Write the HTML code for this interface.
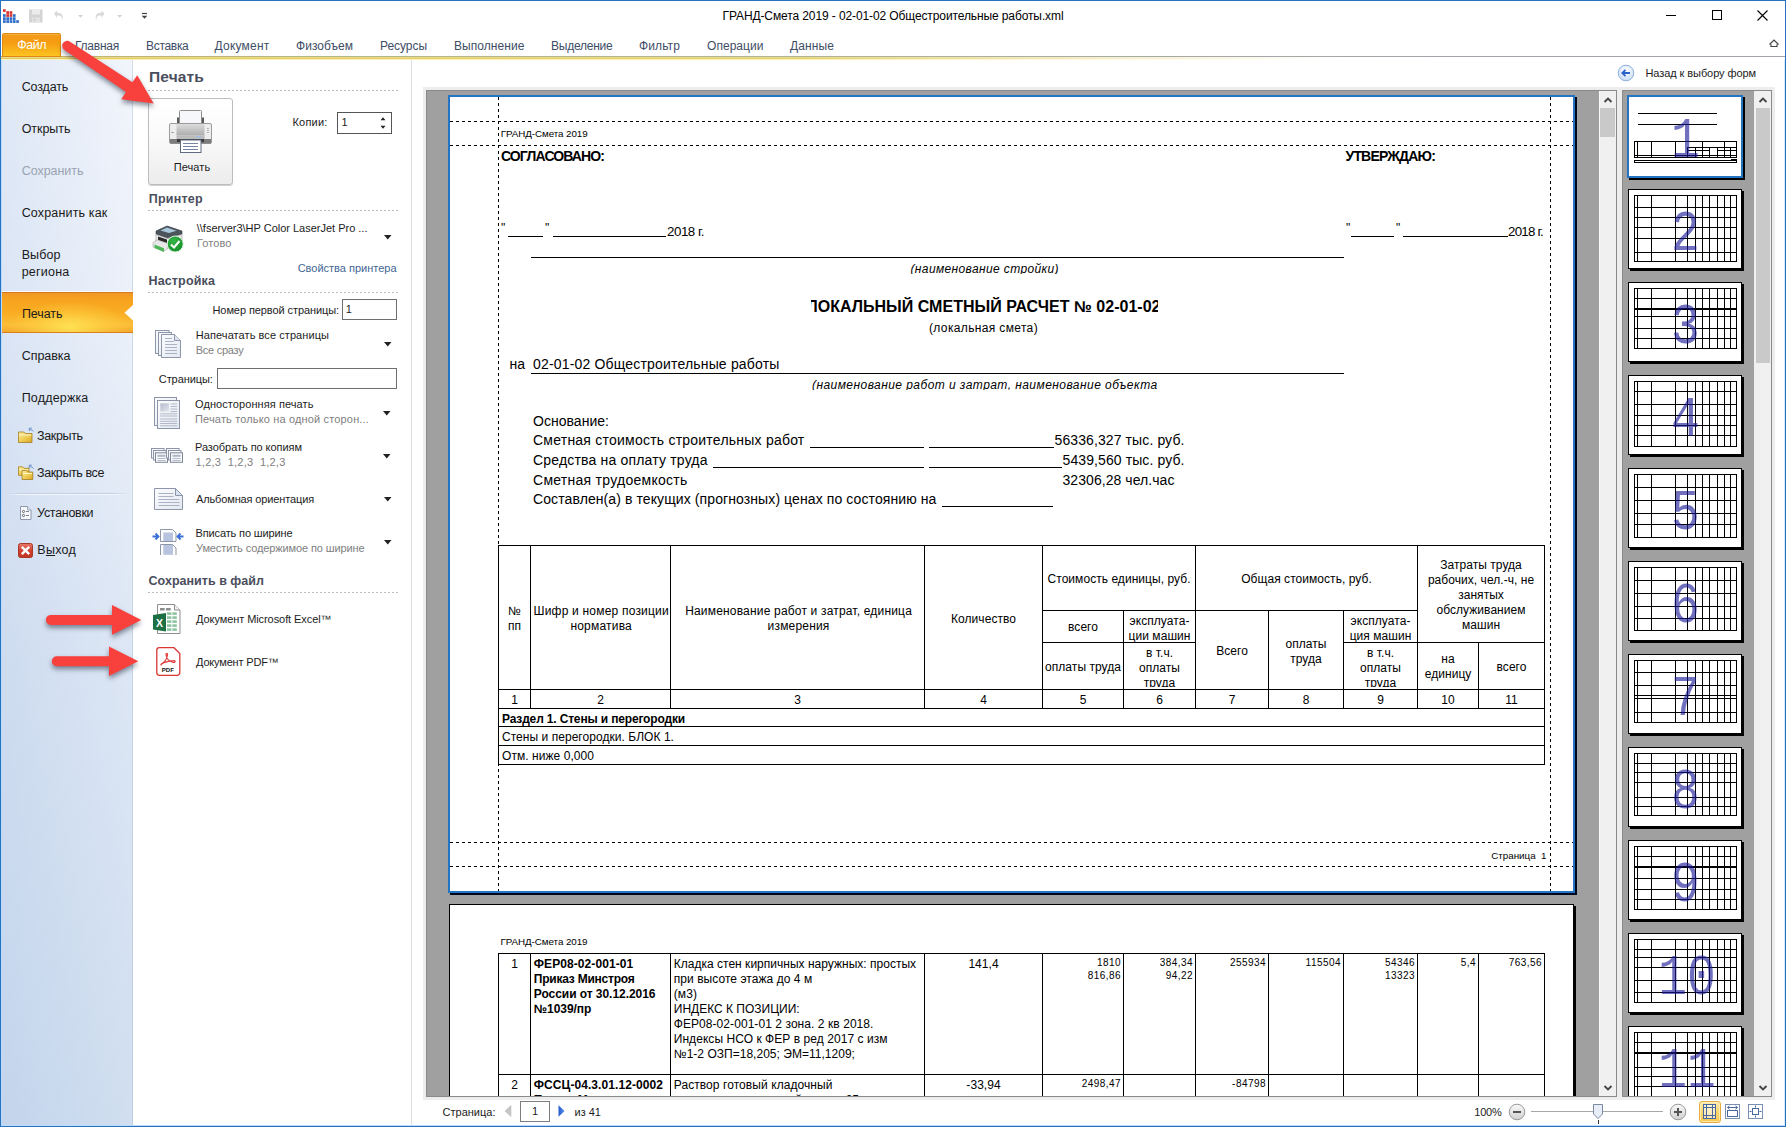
<!DOCTYPE html>
<html lang="ru"><head><meta charset="utf-8"><title>ГРАНД-Смета 2019 - 02-01-02 Общестроительные работы.xml</title>
<style>
html,body{margin:0;padding:0}
body{width:1786px;height:1127px;position:relative;overflow:hidden;background:#fff;font-family:"Liberation Sans",sans-serif}
.a{position:absolute}
.t{position:absolute;white-space:pre}
svg{position:absolute;overflow:visible}
</style></head>
<body>
<div class="a" style="left:0px;top:0px;width:1786px;height:58px;background:#fff;"></div>
<span class="t" style='left:722.50px;top:9.00px;font:400 12px/14px "Liberation Sans", sans-serif;color:#000;letter-spacing:-0.107px;'>ГРАНД-Смета 2019 - 02-01-02 Общестроительные работы.xml</span>
<svg style="left:1660px;top:5px" width="120" height="22" viewBox="1660 5 120 22"><path d="M1666 15.5h10" stroke="#000" stroke-width="1" fill="none"/><rect x="1712.5" y="10.5" width="9" height="9" stroke="#000" stroke-width="1" fill="none"/><path d="M1757.5 10.5l10 10M1767.5 10.5l-10 10" stroke="#000" stroke-width="1.1" fill="none"/></svg>
<svg style="left:1768px;top:38px" width="12" height="10" viewBox="0 0 12 10"><path d="M1.5 6.5L6 2l4.5 4.5M3 6.5v2h6v-2" stroke="#444" stroke-width="1.2" fill="none"/></svg>
<svg style="left:2px;top:8px" width="150" height="16" viewBox="2 8 150 16"><rect x="3" y="9.2" width="2.700" height="2.700" fill="#d9352f"/><rect x="6.3" y="11.215" width="2.700" height="2.700" fill="#d9352f"/><rect x="9.6" y="11.215" width="2.700" height="2.700" fill="#d9352f"/><rect x="6.3" y="14.16" width="2.700" height="2.700" fill="#d9352f"/><rect x="9.6" y="14.16" width="2.700" height="2.700" fill="#d9352f"/><rect x="3" y="14.16" width="2.700" height="2.700" fill="#2f6fc9"/><rect x="12.9" y="14.16" width="2.700" height="2.700" fill="#2f6fc9"/><rect x="3" y="17.26" width="2.700" height="2.700" fill="#2f6fc9"/><rect x="6.3" y="17.26" width="2.700" height="2.700" fill="#2f6fc9"/><rect x="9.6" y="17.26" width="2.700" height="2.700" fill="#2f6fc9"/><rect x="12.9" y="17.26" width="2.700" height="2.700" fill="#2f6fc9"/><rect x="3" y="20.205" width="2.700" height="2.700" fill="#2f6fc9"/><rect x="6.3" y="20.205" width="2.700" height="2.700" fill="#2f6fc9"/><rect x="9.6" y="20.205" width="2.700" height="2.700" fill="#2f6fc9"/><rect x="12.9" y="20.205" width="2.700" height="2.700" fill="#2f6fc9"/><rect x="16.2" y="20.205" width="2.700" height="2.700" fill="#2f6fc9"/><path d="M29 9.500h13.500v13h-13.500z" fill="#d4d4d4"/><rect x="32" y="9.500" width="8" height="5" fill="#ececec"/><rect x="32" y="17.500" width="8" height="5" fill="#e4e4e4"/><rect x="33.500" y="18.500" width="2" height="3" fill="#cfcfcf"/><path d="M54 13.500l3 -3v2.200c5 -.5 7.500 3.500 4.500 8.500c1.500 -4 -.5 -6 -4.500 -5.800v2.600z" fill="#d9d9d9"/><path d="M78 15h5l-2.500 2.700z" fill="#d2d2d2"/><path d="M104.500 13.500l-3 -3v2.200c-5 -.5 -7.500 3.500 -4.500 8.500c-1.500 -4 .5 -6 4.500 -5.800v2.600z" fill="#d9d9d9"/><path d="M117.200 15h5l-2.500 2.700z" fill="#d2d2d2"/><path d="M142 13.500h5" stroke="#444" stroke-width="1.200"/><path d="M141.700 15.700h5.600l-2.800 3.100z" fill="#444"/></svg>
<div class="a" style="left:0px;top:56px;width:1786px;height:1px;background:linear-gradient(90deg,#c4b566 0,#b6b880 20%,#b0b48c 45%,#a6a9a2 65%,#a1a5ab 80%);"></div>
<div class="a" style="left:0px;top:57px;width:1786px;height:1px;background:linear-gradient(90deg,#ead98a 0,#e9dd94 45%,rgba(240,228,170,.5) 62%,rgba(255,255,255,0) 75%);"></div>
<div class="a" style="left:0px;top:58px;width:1786px;height:1px;background:linear-gradient(90deg,#e6cb62 0,#e5ce6c 45%,rgba(236,216,140,.5) 62%,rgba(255,255,255,0) 75%);"></div>
<div class="a" style="left:0px;top:59px;width:1786px;height:1px;background:linear-gradient(90deg,#fbf3b8 0,#fbf5be 45%,rgba(252,248,214,.5) 62%,rgba(255,255,255,0) 75%);"></div>
<div class="a" style="left:133px;top:60px;width:1200px;height:1px;background:linear-gradient(90deg,#fffcec 0,#fffcee 50%,rgba(255,255,255,0) 100%);"></div>
<div class="a" style="left:2px;top:33px;width:59px;height:24px;border-radius:3px 3px 0 0;background:linear-gradient(180deg,#f39a1c 0,#f59c12 40%,#f9b21a 70%,#fdc620 100%);box-shadow:inset 0 0 0 1px #dd8a14,inset 0 2px 1px rgba(255,220,150,.35)"></div>
<span class="t" style='left:17.20px;top:38.00px;font:400 12.5px/15px "Liberation Sans", sans-serif;color:#fff;letter-spacing:-0.484px;'>Файл</span>
<span class="t" style='left:75.00px;top:39.00px;font:400 12px/14px "Liberation Sans", sans-serif;color:#3e4d66;letter-spacing:-0.241px;'>Главная</span>
<span class="t" style='left:146.00px;top:39.00px;font:400 12px/14px "Liberation Sans", sans-serif;color:#3e4d66;letter-spacing:-0.301px;'>Вставка</span>
<span class="t" style='left:214.50px;top:39.00px;font:400 12px/14px "Liberation Sans", sans-serif;color:#3e4d66;letter-spacing:0.221px;'>Документ</span>
<span class="t" style='left:296.00px;top:39.00px;font:400 12px/14px "Liberation Sans", sans-serif;color:#3e4d66;letter-spacing:0.029px;'>Физобъем</span>
<span class="t" style='left:380.00px;top:39.00px;font:400 12px/14px "Liberation Sans", sans-serif;color:#3e4d66;letter-spacing:-0.047px;'>Ресурсы</span>
<span class="t" style='left:454.00px;top:39.00px;font:400 12px/14px "Liberation Sans", sans-serif;color:#3e4d66;letter-spacing:0.066px;'>Выполнение</span>
<span class="t" style='left:551.00px;top:39.00px;font:400 12px/14px "Liberation Sans", sans-serif;color:#3e4d66;letter-spacing:-0.233px;'>Выделение</span>
<span class="t" style='left:639.00px;top:39.00px;font:400 12px/14px "Liberation Sans", sans-serif;color:#3e4d66;letter-spacing:0.115px;'>Фильтр</span>
<span class="t" style='left:707.00px;top:39.00px;font:400 12px/14px "Liberation Sans", sans-serif;color:#3e4d66;letter-spacing:0.045px;'>Операции</span>
<span class="t" style='left:790.00px;top:39.00px;font:400 12px/14px "Liberation Sans", sans-serif;color:#3e4d66;letter-spacing:0.107px;'>Данные</span>
<div class="a" style="left:1px;top:60px;width:132px;height:1066px;background:linear-gradient(180deg,#eef3fb 0,#e6edf8 25%,#d5e1f2 55%,#c5d6ec 100%)"></div>
<div class="a" style="left:1px;top:60px;width:132px;height:1066px;background:linear-gradient(90deg,rgba(190,208,235,.3) 0,rgba(255,255,255,.2) 100%)"></div>
<div class="a" style="left:132px;top:60px;width:1px;height:1066px;background:rgba(150,165,195,.3);"></div>
<div class="a" style="left:1px;top:291px;width:132px;height:1px;background:rgba(255,255,255,.8);"></div>
<div class="a" style="left:1px;top:292px;width:132px;height:41px;background:linear-gradient(180deg,#ee9628 0,#f7a31f 18%,#f9ac22 50%,#fbbe38 80%,#f4a62c 100%);box-shadow:inset 0 1px 0 #d3781c,inset 0 -1px 0 #d8801e"></div>
<div class="a" style="left:1px;top:293px;width:132px;height:39px;background:radial-gradient(ellipse 62px 26px at 52% 88%,rgba(255,226,84,.95),rgba(255,214,70,.5) 55%,rgba(255,210,60,0))"></div>
<svg style="left:123px;top:303px" width="10" height="20" viewBox="0 0 10 20"><path d="M10 2L1.500 9.800L10 17.500z" fill="#fff"/></svg>
<span class="t" style='left:21.70px;top:80.00px;font:400 12.5px/15px "Liberation Sans", sans-serif;color:#1a1a1a;letter-spacing:-0.145px;'>Создать</span>
<span class="t" style='left:21.70px;top:122.00px;font:400 12.5px/15px "Liberation Sans", sans-serif;color:#1a1a1a;letter-spacing:-0.056px;'>Открыть</span>
<span class="t" style='left:21.70px;top:164.00px;font:400 12.5px/15px "Liberation Sans", sans-serif;color:#9aa3b0;letter-spacing:-0.036px;'>Сохранить</span>
<span class="t" style='left:21.70px;top:206.00px;font:400 12.5px/15px "Liberation Sans", sans-serif;color:#1a1a1a;letter-spacing:0.156px;'>Сохранить как</span>
<span class="t" style='left:21.70px;top:248.00px;font:400 12.5px/15px "Liberation Sans", sans-serif;color:#1a1a1a;letter-spacing:0.082px;'>Выбор</span>
<span class="t" style='left:21.70px;top:265.00px;font:400 12.5px/15px "Liberation Sans", sans-serif;color:#1a1a1a;letter-spacing:0.219px;'>региона</span>
<span class="t" style='left:21.90px;top:307.00px;font:400 12.5px/15px "Liberation Sans", sans-serif;color:#1a1a1a;letter-spacing:-0.059px;'>Печать</span>
<span class="t" style='left:21.70px;top:349.00px;font:400 12.5px/15px "Liberation Sans", sans-serif;color:#1a1a1a;letter-spacing:-0.035px;'>Справка</span>
<span class="t" style='left:21.70px;top:391.00px;font:400 12.5px/15px "Liberation Sans", sans-serif;color:#1a1a1a;letter-spacing:0.176px;'>Поддержка</span>
<span class="t" style='left:37.10px;top:429.00px;font:400 12.5px/15px "Liberation Sans", sans-serif;color:#1a1a1a;letter-spacing:-0.365px;'>Закрыть</span>
<span class="t" style='left:37.10px;top:466.00px;font:400 12.5px/15px "Liberation Sans", sans-serif;color:#1a1a1a;letter-spacing:-0.403px;'>Закрыть все</span>
<span class="t" style='left:37.10px;top:506.00px;font:400 12.5px/15px "Liberation Sans", sans-serif;color:#1a1a1a;letter-spacing:-0.294px;'>Установки</span>
<span class="t" style='left:37.30px;top:543.00px;font:400 12.5px/15px "Liberation Sans", sans-serif;color:#1a1a1a;letter-spacing:0.250px;'>В<u>ы</u>ход</span>
<div class="a" style="left:4px;top:493px;width:126px;height:1px;background:linear-gradient(90deg,rgba(180,195,220,0),#c3cfe4 15%,#c3cfe4 85%,rgba(180,195,220,0));"></div>
<div class="a" style="left:4px;top:494px;width:126px;height:1px;background:linear-gradient(90deg,rgba(255,255,255,0),#f4f7fc 15%,#f4f7fc 85%,rgba(255,255,255,0));"></div>
<div class="a" style="left:133px;top:60px;width:278px;height:1066px;background:#fff;"></div>
<div class="a" style="left:411px;top:60px;width:1px;height:1066px;background:#dfdfdf;"></div>
<span class="t" style='left:149.00px;top:67.00px;font:700 15.5px/19px "Liberation Sans", sans-serif;color:#4a4e5c;letter-spacing:0.146px;'>Печать</span>
<div class="a" style="left:148px;top:90px;width:250px;height:1px;background:repeating-linear-gradient(90deg,#b9bcc0 0 2px,transparent 2px 4px)"></div>
<span class="t" style='left:148.70px;top:192.00px;font:700 12.5px/15px "Liberation Sans", sans-serif;color:#4a4e5c;letter-spacing:0.217px;'>Принтер</span>
<div class="a" style="left:148px;top:210px;width:250px;height:1px;background:repeating-linear-gradient(90deg,#b9bcc0 0 2px,transparent 2px 4px)"></div>
<span class="t" style='left:148.50px;top:274.00px;font:700 12.5px/15px "Liberation Sans", sans-serif;color:#4a4e5c;letter-spacing:0.142px;'>Настройка</span>
<div class="a" style="left:148px;top:292px;width:250px;height:1px;background:repeating-linear-gradient(90deg,#b9bcc0 0 2px,transparent 2px 4px)"></div>
<span class="t" style='left:148.50px;top:574.00px;font:700 12.5px/15px "Liberation Sans", sans-serif;color:#4a4e5c;letter-spacing:0.026px;'>Сохранить в файл</span>
<div class="a" style="left:148px;top:592px;width:250px;height:1px;background:repeating-linear-gradient(90deg,#b9bcc0 0 2px,transparent 2px 4px)"></div>
<div class="a" style="left:148px;top:98px;width:85px;height:87px;box-sizing:border-box;border:1px solid #bdbdbd;border-radius:3px;background:linear-gradient(180deg,#fff 0,#fafafa 45%,#ececec 100%);box-shadow:0 1px 0 rgba(0,0,0,.18)"></div>
<span class="t" style='left:173.70px;top:161.00px;font:400 11px/13px "Liberation Sans", sans-serif;color:#1c1c1c;letter-spacing:0.092px;'>Печать</span>
<span class="t" style='left:292.50px;top:116.00px;font:400 11px/13px "Liberation Sans", sans-serif;color:#1c1c1c;letter-spacing:0.195px;'>Копии:</span>
<div class="a" style="left:337px;top:112px;width:55px;height:22px;box-sizing:border-box;border:1px solid #555;background:#fff"></div>
<span class="t" style='left:341.50px;top:116.00px;font:400 11px/13px "Liberation Sans", sans-serif;color:#1c1c1c;'>1</span>
<svg style="left:379.500px;top:116px" width="6" height="14" viewBox="0 0 6 14"><path d="M3 1.200l2.500 3h-5zM3 12.800l2.500-3h-5z" fill="#222"/></svg>
<span class="t" style='left:196.75px;top:222.00px;font:400 11px/13px "Liberation Sans", sans-serif;color:#1c1c1c;letter-spacing:-0.007px;'>\\fserver3\HP Color LaserJet Pro ...</span>
<span class="t" style='left:197.00px;top:237.00px;font:400 11px/13px "Liberation Sans", sans-serif;color:#808080;letter-spacing:0.089px;'>Готово</span>
<svg style="left:383.75px;top:234.5px" width="8" height="5" viewBox="0 0 8 5"><path d="M0 0h7.500L3.750 4.500z" fill="#222"/></svg>
<span class="t" style='left:297.70px;top:262.00px;font:400 11px/13px "Liberation Sans", sans-serif;color:#3f6693;letter-spacing:-0.007px;'>Свойства принтера</span>
<span class="t" style='left:212.50px;top:304.00px;font:400 11px/13px "Liberation Sans", sans-serif;color:#1c1c1c;letter-spacing:-0.087px;'>Номер первой страницы:</span>
<div class="a" style="left:342px;top:299px;width:55px;height:21px;box-sizing:border-box;border:1px solid #6e6e6e;background:#fff"></div>
<span class="t" style='left:345.70px;top:303.00px;font:400 11px/13px "Liberation Sans", sans-serif;color:#1c1c1c;'>1</span>
<span class="t" style='left:195.80px;top:329.00px;font:400 11px/13px "Liberation Sans", sans-serif;color:#1c1c1c;letter-spacing:0.070px;'>Напечатать все страницы</span>
<span class="t" style='left:195.80px;top:344.00px;font:400 11px/13px "Liberation Sans", sans-serif;color:#808080;letter-spacing:-0.261px;'>Все сразу</span>
<svg style="left:383.75px;top:342px" width="8" height="5" viewBox="0 0 8 5"><path d="M0 0h7.500L3.750 4.500z" fill="#222"/></svg>
<span class="t" style='left:158.80px;top:373.00px;font:400 11px/13px "Liberation Sans", sans-serif;color:#1c1c1c;letter-spacing:-0.078px;'>Страницы:</span>
<div class="a" style="left:217px;top:368px;width:180px;height:21px;box-sizing:border-box;border:1px solid #6e6e6e;background:#fff"></div>
<span class="t" style='left:195.00px;top:398.00px;font:400 11px/13px "Liberation Sans", sans-serif;color:#1c1c1c;letter-spacing:0.080px;'>Односторонняя печать</span>
<span class="t" style='left:195.00px;top:413.00px;font:400 11px/13px "Liberation Sans", sans-serif;color:#808080;letter-spacing:0.153px;'>Печать только на одной сторон...</span>
<svg style="left:383.25px;top:411px" width="8" height="5" viewBox="0 0 8 5"><path d="M0 0h7.500L3.750 4.500z" fill="#222"/></svg>
<span class="t" style='left:195.00px;top:441.00px;font:400 11px/13px "Liberation Sans", sans-serif;color:#1c1c1c;letter-spacing:-0.049px;'>Разобрать по копиям</span>
<span class="t" style='left:195.50px;top:456.00px;font:400 11px/13px "Liberation Sans", sans-serif;color:#808080;letter-spacing:0.230px;'>1,2,3  1,2,3  1,2,3</span>
<svg style="left:383.25px;top:454px" width="8" height="5" viewBox="0 0 8 5"><path d="M0 0h7.500L3.750 4.500z" fill="#222"/></svg>
<span class="t" style='left:196.00px;top:493.00px;font:400 11px/13px "Liberation Sans", sans-serif;color:#1c1c1c;letter-spacing:-0.134px;'>Альбомная ориентация</span>
<svg style="left:383.75px;top:497px" width="8" height="5" viewBox="0 0 8 5"><path d="M0 0h7.500L3.750 4.500z" fill="#222"/></svg>
<span class="t" style='left:195.50px;top:527.00px;font:400 11px/13px "Liberation Sans", sans-serif;color:#1c1c1c;letter-spacing:-0.130px;'>Вписать по ширине</span>
<span class="t" style='left:196.00px;top:542.00px;font:400 11px/13px "Liberation Sans", sans-serif;color:#808080;letter-spacing:-0.112px;'>Уместить содержимое по ширине</span>
<svg style="left:383.75px;top:540px" width="8" height="5" viewBox="0 0 8 5"><path d="M0 0h7.500L3.750 4.500z" fill="#222"/></svg>
<span class="t" style='left:196.00px;top:613.00px;font:400 11px/13px "Liberation Sans", sans-serif;color:#1c1c1c;letter-spacing:-0.077px;'>Документ Microsoft Excel™</span>
<span class="t" style='left:196.00px;top:656.00px;font:400 11px/13px "Liberation Sans", sans-serif;color:#1c1c1c;letter-spacing:-0.181px;'>Документ PDF™</span>
<svg style="left:0;top:0" width="420" height="700" viewBox="0 0 420 700"><defs><linearGradient id="gBody" x1="0" y1="0" x2="0" y2="1"><stop offset="0" stop-color="#dcdcdc"/><stop offset="1" stop-color="#adadad"/></linearGradient><linearGradient id="gPage" x1="0" y1="0" x2="1" y2="1"><stop offset="0" stop-color="#fbfcfe"/><stop offset="1" stop-color="#e3e8f1"/></linearGradient><linearGradient id="gFold" x1="0" y1="0" x2="1" y2="1"><stop offset="0" stop-color="#fbeea0"/><stop offset=".5" stop-color="#f0cf58"/><stop offset="1" stop-color="#d9a724"/></linearGradient><linearGradient id="gPic" x1="0" y1="0" x2="1" y2="1"><stop offset="0" stop-color="#b4bccb"/><stop offset="1" stop-color="#e2e6ee"/></linearGradient><linearGradient id="gX" x1="0" y1="0" x2="0" y2="1"><stop offset="0" stop-color="#e8796a"/><stop offset=".5" stop-color="#d2402e"/><stop offset="1" stop-color="#c33422"/></linearGradient><radialGradient id="gOk" cx=".4" cy=".3" r=".8"><stop offset="0" stop-color="#35b548"/><stop offset="1" stop-color="#128a25"/></radialGradient></defs><rect x="177" y="117.500" width="3" height="6" fill="#5a5a5a"/><rect x="201" y="117.500" width="3" height="6" fill="#5a5a5a"/><rect x="179.500" y="110.500" width="22" height="13" rx="1" fill="#f5f7fb" stroke="#8e8e8e"/><rect x="169.500" y="123.500" width="42" height="20" rx="1.500" fill="#ededed" stroke="#9c9c9c"/><rect x="176.500" y="124" width="28" height="11.500" fill="url(#gBody)"/><rect x="176.500" y="135.500" width="28" height="3.500" fill="#bcbcbc"/><rect x="170" y="139" width="41" height="4.500" fill="#7c7c7c"/><rect x="177" y="139" width="27" height="3" fill="#3a3a3a"/><path d="M171.500 132.500h2" stroke="#8a8a8a"/><path d="M207 128.500h1.800M207 130.500h1.800M207 132.500h1.800" stroke="#9a9a9a" stroke-width=".8"/><rect x="196" y="135.800" width="5" height="2" fill="#a9bde0"/><rect x="180.500" y="140" width="20.500" height="12.500" fill="#fff" stroke="#5f6b80"/><path d="M183 143.500h15M183 146.500h15M183 149.500h15" stroke="#7685a0" stroke-width="1"/><path d="M156 231l11 -5l15 5v3l-14.500 4l-11.500 -4z" fill="#4c545c" stroke="#30363c" stroke-width=".6"/><path d="M160.500 230.500l6.500 -3l9.500 3.200l-7.500 2.300z" fill="#a9c8dc"/><path d="M156 234.500l11.500 4l14.500 -4v8l-14.500 5.500l-11.500 -4.500z" fill="#f2f2f2" stroke="#8a8a8a" stroke-width=".6"/><path d="M158 236.500l9 3v3.500l-9 -3z" fill="#2a2a2a"/><path d="M153 242.500l4.500 -2.500l10 3.500v5.500l-4 2.500l-10.500 -4.500z" fill="#e8e8e8" stroke="#9a9a9a" stroke-width=".5"/><path d="M154.500 244.500l9.500 3.800v3.700l-9.500 -4z" fill="#4cb856"/><circle cx="175.200" cy="244" r="8" fill="url(#gOk)" stroke="#dff2e0" stroke-width="1"/><path d="M171 244.500l3 3l5.500 -6.500" stroke="#fff" stroke-width="2" fill="none"/><rect x="155.500" y="330.500" width="13.500" height="23" fill="url(#gPage)" stroke="#8c96a8"/><rect x="158.500" y="332.500" width="13" height="23" fill="url(#gPage)" stroke="#8c96a8"/><path d="M161.500 334.500h13l6 6v17h-19z" fill="url(#gPage)" stroke="#8c96a8"/><path d="M174.500 334.500v6h6" fill="#dfe5ef" stroke="#8c96a8"/><path d="M165 338.500h7M165 341.500h9M165 344.500h12M165 347.500h12M165 350.500h12M165 353.500h12" stroke="#aab3c4"/><rect x="154.500" y="397.500" width="22" height="28" fill="url(#gPage)" stroke="#8c96a8"/><rect x="157.500" y="400.500" width="22" height="28" fill="url(#gPage)" stroke="#8c96a8"/><rect x="160.300" y="403.300" width="8.700" height="8.300" fill="url(#gPic)"/><path d="M170.500 404h6.500M170.500 406.500h6.500M170.500 409h6.500M170.500 411.500h6.500" stroke="#aab3c4" stroke-width=".9"/><path d="M160 413.800h17M160 416h17M160 419h17M160 421.300h17M160 423.500h17M160 425.800h17" stroke="#aab3c4" stroke-width=".9"/><rect x="151.5" y="448.500" width="12.500" height="9.500" fill="#f6f8fb" stroke="#8c96a8"/><rect x="153.5" y="450.500" width="12.500" height="9.500" fill="#f6f8fb" stroke="#8c96a8"/><rect x="155.5" y="452.800" width="12" height="9.500" fill="#f6f8fb" stroke="#7d8798"/><rect x="157.5" y="454.800" width="8" height="2" fill="#aeb7c6"/><path d="M157.5 458.500h8M157.5 460.500h8" stroke="#aab3c4" stroke-width=".9"/><rect x="166.5" y="448.500" width="12.500" height="9.500" fill="#f6f8fb" stroke="#8c96a8"/><rect x="168.5" y="450.500" width="12.500" height="9.500" fill="#f6f8fb" stroke="#8c96a8"/><rect x="170.5" y="452.800" width="12" height="9.500" fill="#f6f8fb" stroke="#7d8798"/><rect x="172.5" y="454.800" width="8" height="2" fill="#aeb7c6"/><path d="M172.5 458.500h8M172.5 460.500h8" stroke="#aab3c4" stroke-width=".9"/><path d="M154.500 488.500h21l7 7v14h-28z" fill="url(#gPage)" stroke="#8c96a8"/><path d="M175.500 488.500v7h7z" fill="#d9e2f0" stroke="#8c96a8"/><path d="M158.500 493.500h15M158.500 496.500h15M158.500 499.500h21M158.500 502.500h21M158.500 505.500h21" stroke="#aab3c4"/><path d="M160.500 529.500h12l3.500 3.500v8.500h-15.500z" fill="#fdfdfe" stroke="#8c96a8"/><rect x="163.300" y="532.500" width="9.700" height="8.500" fill="#b7c3df"/><path d="M160.500 555v-10.500h12l3.500 3.500v7" fill="#fdfdfe" stroke="#8c96a8"/><rect x="163.300" y="545" width="9.700" height="9.800" fill="#b7c3df"/><path d="M152.500 536.500h6M155.500 533.500l3 3l-3 3" stroke="#3c6fd6" stroke-width="1.800" fill="none"/><path d="M183.500 536.500h-6M180.500 533.500l-3 3l3 3" stroke="#3c6fd6" stroke-width="1.800" fill="none"/><path d="M157.500 604.500h17l5.500 5.500v23.500h-22.500z" fill="#fff" stroke="#8e8e8e"/><path d="M174.500 604.500v5.500h5.500" fill="#f0f0f0" stroke="#8e8e8e"/><g fill="#8e8e8e"><rect x="160" y="608" width="4.700" height="2.500"/><rect x="166" y="608" width="4.700" height="2.500"/></g><rect x="167" y="612.3" width="4.400" height="2.600" fill="#8cc3a0"/><rect x="172.4" y="612.3" width="4.400" height="2.600" fill="#8cc3a0"/><rect x="167" y="616.3" width="4.400" height="2.600" fill="#8cc3a0"/><rect x="172.4" y="616.3" width="4.400" height="2.600" fill="#8cc3a0"/><rect x="167" y="620.3" width="4.400" height="2.600" fill="#8cc3a0"/><rect x="172.4" y="620.3" width="4.400" height="2.600" fill="#8cc3a0"/><rect x="167" y="624.3" width="4.400" height="2.600" fill="#8cc3a0"/><rect x="172.4" y="624.3" width="4.400" height="2.600" fill="#8cc3a0"/><rect x="167" y="628.3" width="4.400" height="2.600" fill="#8cc3a0"/><rect x="172.4" y="628.3" width="4.400" height="2.600" fill="#8cc3a0"/><path d="M153 615l13 -2v18.500l-13 -2z" fill="#1d7044"/><text x="159.600" y="626.500" font-family="Liberation Sans,sans-serif" font-weight="700" font-size="10.500" fill="#fff" text-anchor="middle">X</text><path d="M159.300 647.700h14.700l5.800 5.800v19.300a2.500 2.500 0 0 1 -2.500 2.500h-18a2.500 2.500 0 0 1 -2.500 -2.500v-22.600a2.500 2.500 0 0 1 2.500 -2.500z" fill="#fff" stroke="#d93636" stroke-width="1.300"/><path d="M161.500 663.800c2.800 -1.200 5.300 -5 6 -8.800c.4 -2.300 -1.900 -2.300 -1.500 0c.6 3.600 3.700 6.600 7.300 7.300c2.400 .4 2.400 -1.900 0 -1.600c-4 .4 -8.700 1.400 -11.600 3.200c-1.500 1 -.600 1.900 -.200 -.100z" fill="none" stroke="#e23c3c" stroke-width="1.200"/><text x="167.800" y="672.200" font-family="Liberation Sans,sans-serif" font-weight="700" font-size="6" fill="#111" text-anchor="middle">PDF</text><path d="M18.5 432h5.4l1.500 1.500h6.6v9h-13.5z" fill="url(#gFold)" stroke="#a37e22" stroke-width=".8"/><path d="M19.3 435h11.9" stroke="#fdf4c4" stroke-width="1"/><path d="M33.5 431.5c-1.500 -2 -3 -2 -4 -1.200M29.3 430.7v-2.500h2.500" stroke="#5a82c0" stroke-width=".9" fill="none"/><path d="M18.5 466.8h4.2l1.500 1.500h4.8v7h-10.5z" fill="url(#gFold)" stroke="#a37e22" stroke-width=".8"/><path d="M19.3 469.8h8.9" stroke="#fdf4c4" stroke-width="1"/><path d="M22 470.5h4.32l1.500 1.500h4.98v7.5h-10.8z" fill="url(#gFold)" stroke="#a37e22" stroke-width=".8"/><path d="M22.8 473.5h9.2" stroke="#fdf4c4" stroke-width="1"/><path d="M33.5 468.5c-1.500 -2 -3 -2 -4 -1.200M29.3 467.7v-2.500h2.500" stroke="#5a82c0" stroke-width=".9" fill="none"/><path d="M20.500 506.500h7l3.500 3.500v9.500h-10.500z" fill="#f7f9fc" stroke="#8e98aa"/><path d="M27.500 506.500v3.500h3.500" fill="#e0e6f0" stroke="#8e98aa" stroke-width=".8"/><circle cx="23.500" cy="511.500" r="1.100" fill="none" stroke="#4a4a4a" stroke-width=".8"/><circle cx="23.500" cy="515.500" r="1.100" fill="none" stroke="#4a4a4a" stroke-width=".8"/><path d="M26 511.500h3M26 515.500h3" stroke="#7a8496" stroke-width="1"/><rect x="18.500" y="543.500" width="14" height="14" rx="2" fill="url(#gX)" stroke="#a8382a"/><path d="M21.800 546.800l7.400 7.400M29.200 546.800l-7.400 7.400" stroke="#fff" stroke-width="2.400"/></svg>
<div class="a" style="left:423px;top:87px;width:1352px;height:1013px;background:#ededed;"></div>
<div class="a" style="left:426px;top:90px;width:1191px;height:1007px;background:#8a8a8a;"></div>
<div class="a" style="left:427px;top:91px;width:1172px;height:1005px;background:#a0a0a0;"></div>
<div class="a" style="left:450px;top:97px;width:1127px;height:798px;background:#00061c;"></div>
<div class="a" style="left:448px;top:95px;width:1127px;height:798px;background:#2474c4;"></div>
<div class="a" style="left:450px;top:97px;width:1123px;height:794px;background:#fff;"></div>
<div class="a" style="left:450px;top:121px;width:1123px;height:1px;background:repeating-linear-gradient(90deg,#000 0 3px,transparent 3px 6px)"></div>
<div class="a" style="left:450px;top:145px;width:1123px;height:1px;background:repeating-linear-gradient(90deg,#000 0 3px,transparent 3px 6px)"></div>
<div class="a" style="left:450px;top:842px;width:1123px;height:1px;background:repeating-linear-gradient(90deg,#000 0 3px,transparent 3px 6px)"></div>
<div class="a" style="left:450px;top:866px;width:1123px;height:1px;background:repeating-linear-gradient(90deg,#000 0 3px,transparent 3px 6px)"></div>
<div class="a" style="left:498px;top:97px;width:1px;height:794px;background:repeating-linear-gradient(180deg,#000 0 3px,transparent 3px 6px)"></div>
<div class="a" style="left:1550px;top:97px;width:1px;height:794px;background:repeating-linear-gradient(180deg,#000 0 3px,transparent 3px 6px)"></div>
<span class="t" style='left:500.75px;top:128.00px;font:400 9.8px/12px "Liberation Sans", sans-serif;color:#000;letter-spacing:-0.076px;'>ГРАНД-Смета 2019</span>
<span class="t" style='left:1491.25px;top:850.00px;font:400 9.8px/12px "Liberation Sans", sans-serif;color:#000;'>Страница  1</span>
<span class="t" style='left:501.00px;top:148.00px;font:700 14px/17px "Liberation Sans", sans-serif;color:#000;letter-spacing:-0.889px;'>СОГЛАСОВАНО:</span>
<span class="t" style='left:1345.50px;top:148.00px;font:700 14px/17px "Liberation Sans", sans-serif;color:#000;letter-spacing:-0.820px;'>УТВЕРЖДАЮ:</span>
<span class="t" style='left:501.00px;top:221.00px;font:400 12px/14px "Liberation Sans", sans-serif;color:#000;'>"</span>
<div class="a" style="left:508px;top:236px;width:35px;height:1px;background:#000"></div>
<span class="t" style='left:545.00px;top:221.00px;font:400 12px/14px "Liberation Sans", sans-serif;color:#000;'>"</span>
<div class="a" style="left:553px;top:236px;width:113px;height:1px;background:#000"></div>
<span class="t" style='left:667.00px;top:224.00px;font:400 13.33px/16px "Liberation Sans", sans-serif;color:#000;letter-spacing:-0.471px;'>2018 г.</span>
<span class="t" style='left:1346.00px;top:221.00px;font:400 12px/14px "Liberation Sans", sans-serif;color:#000;'>"</span>
<div class="a" style="left:1351px;top:236px;width:43px;height:1px;background:#000"></div>
<span class="t" style='left:1396.00px;top:221.00px;font:400 12px/14px "Liberation Sans", sans-serif;color:#000;'>"</span>
<div class="a" style="left:1403px;top:236px;width:105px;height:1px;background:#000"></div>
<span class="t" style='left:1508.00px;top:224.00px;font:400 13.33px/16px "Liberation Sans", sans-serif;color:#000;letter-spacing:-0.757px;'>2018 г.</span>
<div class="a" style="left:531px;top:257px;width:813px;height:1px;background:#000"></div>
<div class="a" style="left:900px;top:258px;width:170px;height:16px;overflow:hidden"><span class="t" style='left:10.50px;top:4.00px;font:italic 400 12px/14px "Liberation Sans", sans-serif;color:#000;letter-spacing:0.372px;'>(наименование стройки)</span></div>
<div class="a" style="left:811px;top:292px;width:347px;height:30px;overflow:hidden"><span class="t" style='left:-4.50px;top:5.00px;font:700 16px/19px "Liberation Sans", sans-serif;color:#000;letter-spacing:0.017px;'>ЛОКАЛЬНЫЙ СМЕТНЫЙ РАСЧЕТ № 02-01-02</span></div>
<span class="t" style='left:929.00px;top:321.00px;font:400 12px/14px "Liberation Sans", sans-serif;color:#000;letter-spacing:0.357px;'>(локальная смета)</span>
<span class="t" style='left:509.50px;top:356.00px;font:400 14px/17px "Liberation Sans", sans-serif;color:#000;letter-spacing:-0.016px;'>на</span>
<span class="t" style='left:533.00px;top:356.00px;font:400 14px/17px "Liberation Sans", sans-serif;color:#000;letter-spacing:0.177px;'>02-01-02 Общестроительные работы</span>
<div class="a" style="left:531px;top:373px;width:813px;height:1px;background:#000"></div>
<div class="a" style="left:800px;top:374px;width:370px;height:16px;overflow:hidden"><span class="t" style='left:12.00px;top:4.00px;font:italic 400 12px/14px "Liberation Sans", sans-serif;color:#000;letter-spacing:0.439px;'>(наименование работ и затрат, наименование объекта)</span></div>
<div class="a" style="left:1156.5px;top:374px;width:20px;height:16px;background:#fff;"></div>
<span class="t" style='left:533.00px;top:413.00px;font:400 14px/17px "Liberation Sans", sans-serif;color:#000;letter-spacing:0.030px;'>Основание:</span>
<span class="t" style='left:533.00px;top:432.00px;font:400 14px/17px "Liberation Sans", sans-serif;color:#000;letter-spacing:0.227px;'>Сметная стоимость строительных работ</span>
<div class="a" style="left:809.5px;top:447px;width:114px;height:1px;background:#000"></div>
<div class="a" style="left:928.5px;top:447px;width:125.5px;height:1px;background:#000"></div>
<span class="t" style='left:1054.50px;top:432.00px;font:400 14px/17px "Liberation Sans", sans-serif;color:#000;letter-spacing:0.104px;'>56336,327 тыс. руб.</span>
<span class="t" style='left:533.00px;top:452.00px;font:400 14px/17px "Liberation Sans", sans-serif;color:#000;letter-spacing:0.182px;'>Средства на оплату труда</span>
<div class="a" style="left:712.5px;top:467px;width:211px;height:1px;background:#000"></div>
<div class="a" style="left:928.5px;top:467px;width:133.5px;height:1px;background:#000"></div>
<span class="t" style='left:1062.50px;top:452.00px;font:400 14px/17px "Liberation Sans", sans-serif;color:#000;letter-spacing:0.098px;'>5439,560 тыс. руб.</span>
<span class="t" style='left:533.00px;top:472.00px;font:400 14px/17px "Liberation Sans", sans-serif;color:#000;letter-spacing:0.266px;'>Сметная трудоемкость</span>
<span class="t" style='left:1062.50px;top:472.00px;font:400 14px/17px "Liberation Sans", sans-serif;color:#000;letter-spacing:0.060px;'>32306,28 чел.час</span>
<span class="t" style='left:533.00px;top:491.00px;font:400 14px/17px "Liberation Sans", sans-serif;color:#000;letter-spacing:0.096px;'>Составлен(а) в текущих (прогнозных) ценах по состоянию на</span>
<div class="a" style="left:941.5px;top:506px;width:111.5px;height:1px;background:#000"></div>
<div class="a" style="left:498px;top:545px;width:1047px;height:1px;background:#000"></div>
<div class="a" style="left:1042px;top:610px;width:376px;height:1px;background:#000"></div>
<div class="a" style="left:1042px;top:642px;width:154px;height:1px;background:#000"></div>
<div class="a" style="left:1343px;top:642px;width:202px;height:1px;background:#000"></div>
<div class="a" style="left:498px;top:689px;width:1047px;height:1px;background:#000"></div>
<div class="a" style="left:498px;top:708px;width:1047px;height:1px;background:#000"></div>
<div class="a" style="left:498px;top:726px;width:1047px;height:1px;background:#000"></div>
<div class="a" style="left:498px;top:745px;width:1047px;height:1px;background:#000"></div>
<div class="a" style="left:498px;top:764px;width:1047px;height:1px;background:#000"></div>
<div class="a" style="left:498px;top:545px;width:1px;height:219px;background:#000"></div>
<div class="a" style="left:530px;top:545px;width:1px;height:163px;background:#000"></div>
<div class="a" style="left:670px;top:545px;width:1px;height:163px;background:#000"></div>
<div class="a" style="left:924px;top:545px;width:1px;height:163px;background:#000"></div>
<div class="a" style="left:1042px;top:545px;width:1px;height:163px;background:#000"></div>
<div class="a" style="left:1123px;top:610px;width:1px;height:98px;background:#000"></div>
<div class="a" style="left:1195px;top:545px;width:1px;height:163px;background:#000"></div>
<div class="a" style="left:1268px;top:610px;width:1px;height:98px;background:#000"></div>
<div class="a" style="left:1343px;top:610px;width:1px;height:98px;background:#000"></div>
<div class="a" style="left:1417px;top:545px;width:1px;height:163px;background:#000"></div>
<div class="a" style="left:1478px;top:642px;width:1px;height:66px;background:#000"></div>
<div class="a" style="left:1544px;top:545px;width:1px;height:219px;background:#000"></div>
<span class="t" style='left:508.06px;top:604.00px;font:400 12px/14px "Liberation Sans", sans-serif;color:#000;letter-spacing:0.050px;'>№</span><span class="t" style='left:507.98px;top:619.00px;font:400 12px/14px "Liberation Sans", sans-serif;color:#000;letter-spacing:0.050px;'>пп</span>
<span class="t" style='left:533.51px;top:604.00px;font:400 12px/14px "Liberation Sans", sans-serif;color:#000;letter-spacing:0.200px;'>Шифр и номер позиции</span><span class="t" style='left:570.43px;top:619.00px;font:400 12px/14px "Liberation Sans", sans-serif;color:#000;letter-spacing:0.200px;'>норматива</span>
<span class="t" style='left:685.18px;top:604.00px;font:400 12px/14px "Liberation Sans", sans-serif;color:#000;letter-spacing:0.180px;'>Наименование работ и затрат, единица</span><span class="t" style='left:767.62px;top:619.00px;font:400 12px/14px "Liberation Sans", sans-serif;color:#000;letter-spacing:0.180px;'>измерения</span>
<span class="t" style='left:951.05px;top:612.00px;font:400 12px/14px "Liberation Sans", sans-serif;color:#000;letter-spacing:0.050px;'>Количество</span>
<span class="t" style='left:1047.50px;top:572.00px;font:400 12px/14px "Liberation Sans", sans-serif;color:#000;letter-spacing:0.050px;'>Стоимость единицы, руб.</span>
<span class="t" style='left:1241.23px;top:572.00px;font:400 12px/14px "Liberation Sans", sans-serif;color:#000;letter-spacing:0.050px;'>Общая стоимость, руб.</span>
<span class="t" style='left:1440.19px;top:558.00px;font:400 12px/14px "Liberation Sans", sans-serif;color:#000;letter-spacing:0.050px;'>Затраты труда</span><span class="t" style='left:1427.88px;top:573.00px;font:400 12px/14px "Liberation Sans", sans-serif;color:#000;letter-spacing:0.050px;'>рабочих, чел.-ч, не</span><span class="t" style='left:1458.14px;top:588.00px;font:400 12px/14px "Liberation Sans", sans-serif;color:#000;letter-spacing:0.050px;'>занятых</span><span class="t" style='left:1436.47px;top:603.00px;font:400 12px/14px "Liberation Sans", sans-serif;color:#000;letter-spacing:0.050px;'>обслуживанием</span><span class="t" style='left:1461.95px;top:618.00px;font:400 12px/14px "Liberation Sans", sans-serif;color:#000;letter-spacing:0.050px;'>машин</span>
<span class="t" style='left:1068.05px;top:620.00px;font:400 12px/14px "Liberation Sans", sans-serif;color:#000;letter-spacing:0.050px;'>всего</span>
<span class="t" style='left:1129.61px;top:614.00px;font:400 12px/14px "Liberation Sans", sans-serif;color:#000;letter-spacing:0.050px;'>эксплуата-</span><span class="t" style='left:1128.55px;top:629.00px;font:400 12px/14px "Liberation Sans", sans-serif;color:#000;letter-spacing:0.050px;'>ции машин</span>
<span class="t" style='left:1045.05px;top:660.00px;font:400 12px/14px "Liberation Sans", sans-serif;color:#000;letter-spacing:0.050px;'>оплаты труда</span>
<div class="a" style="left:1124px;top:643px;width:71px;height:44px;overflow:hidden"><span class="t" style='left:21.98px;top:3.00px;font:400 12px/14px "Liberation Sans", sans-serif;color:#000;letter-spacing:0.050px;'>в т.ч.</span><span class="t" style='left:15.02px;top:18.00px;font:400 12px/14px "Liberation Sans", sans-serif;color:#000;letter-spacing:0.050px;'>оплаты</span><span class="t" style='left:19.74px;top:33.00px;font:400 12px/14px "Liberation Sans", sans-serif;color:#000;letter-spacing:0.050px;'>труда</span></div>
<span class="t" style='left:1216.17px;top:644.00px;font:400 12px/14px "Liberation Sans", sans-serif;color:#000;letter-spacing:0.050px;'>Всего</span>
<span class="t" style='left:1285.52px;top:637.00px;font:400 12px/14px "Liberation Sans", sans-serif;color:#000;letter-spacing:0.050px;'>оплаты</span><span class="t" style='left:1290.24px;top:652.00px;font:400 12px/14px "Liberation Sans", sans-serif;color:#000;letter-spacing:0.050px;'>труда</span>
<span class="t" style='left:1350.61px;top:614.00px;font:400 12px/14px "Liberation Sans", sans-serif;color:#000;letter-spacing:0.050px;'>эксплуата-</span><span class="t" style='left:1349.65px;top:629.00px;font:400 12px/14px "Liberation Sans", sans-serif;color:#000;letter-spacing:0.050px;'>ция машин</span>
<div class="a" style="left:1344px;top:643px;width:73px;height:44px;overflow:hidden"><span class="t" style='left:22.98px;top:3.00px;font:400 12px/14px "Liberation Sans", sans-serif;color:#000;letter-spacing:0.050px;'>в т.ч.</span><span class="t" style='left:16.02px;top:18.00px;font:400 12px/14px "Liberation Sans", sans-serif;color:#000;letter-spacing:0.050px;'>оплаты</span><span class="t" style='left:20.74px;top:33.00px;font:400 12px/14px "Liberation Sans", sans-serif;color:#000;letter-spacing:0.050px;'>труда</span></div>
<span class="t" style='left:1441.32px;top:652.00px;font:400 12px/14px "Liberation Sans", sans-serif;color:#000;letter-spacing:0.050px;'>на</span><span class="t" style='left:1424.69px;top:667.00px;font:400 12px/14px "Liberation Sans", sans-serif;color:#000;letter-spacing:0.050px;'>единицу</span>
<span class="t" style='left:1496.55px;top:660.00px;font:400 12px/14px "Liberation Sans", sans-serif;color:#000;letter-spacing:0.050px;'>всего</span>
<span class="t" style='left:511.16px;top:693.00px;font:400 12px/14px "Liberation Sans", sans-serif;color:#000;letter-spacing:0.050px;'>1</span>
<span class="t" style='left:597.16px;top:693.00px;font:400 12px/14px "Liberation Sans", sans-serif;color:#000;letter-spacing:0.050px;'>2</span>
<span class="t" style='left:794.16px;top:693.00px;font:400 12px/14px "Liberation Sans", sans-serif;color:#000;letter-spacing:0.050px;'>3</span>
<span class="t" style='left:980.16px;top:693.00px;font:400 12px/14px "Liberation Sans", sans-serif;color:#000;letter-spacing:0.050px;'>4</span>
<span class="t" style='left:1079.66px;top:693.00px;font:400 12px/14px "Liberation Sans", sans-serif;color:#000;letter-spacing:0.050px;'>5</span>
<span class="t" style='left:1156.16px;top:693.00px;font:400 12px/14px "Liberation Sans", sans-serif;color:#000;letter-spacing:0.050px;'>6</span>
<span class="t" style='left:1228.66px;top:693.00px;font:400 12px/14px "Liberation Sans", sans-serif;color:#000;letter-spacing:0.050px;'>7</span>
<span class="t" style='left:1302.66px;top:693.00px;font:400 12px/14px "Liberation Sans", sans-serif;color:#000;letter-spacing:0.050px;'>8</span>
<span class="t" style='left:1377.16px;top:693.00px;font:400 12px/14px "Liberation Sans", sans-serif;color:#000;letter-spacing:0.050px;'>9</span>
<span class="t" style='left:1441.30px;top:693.00px;font:400 12px/14px "Liberation Sans", sans-serif;color:#000;letter-spacing:0.050px;'>10</span>
<span class="t" style='left:1505.24px;top:693.00px;font:400 12px/14px "Liberation Sans", sans-serif;color:#000;letter-spacing:0.050px;'>11</span>
<span class="t" style='left:502.00px;top:712.00px;font:700 12px/14px "Liberation Sans", sans-serif;color:#000;letter-spacing:-0.158px;'>Раздел 1. Стены и перегородки</span>
<span class="t" style='left:502.00px;top:730.00px;font:400 12px/14px "Liberation Sans", sans-serif;color:#000;letter-spacing:0.044px;'>Стены и перегородки. БЛОК 1.</span>
<span class="t" style='left:502.00px;top:749.00px;font:400 12px/14px "Liberation Sans", sans-serif;color:#000;letter-spacing:0.056px;'>Отм. ниже 0,000</span>
<div class="a" style="left:426px;top:900px;width:1173px;height:196px;overflow:hidden">
<div class="a" style="left:-426px;top:-900px;width:0;height:0">
<div class="a" style="left:449px;top:904px;width:1125px;height:300px;background:#000;"></div>
<div class="a" style="left:450px;top:905px;width:1123px;height:300px;background:#fff;"></div>
<span class="t" style='left:500.50px;top:936.00px;font:400 9.8px/12px "Liberation Sans", sans-serif;color:#000;letter-spacing:-0.061px;'>ГРАНД-Смета 2019</span>
<div class="a" style="left:498px;top:953px;width:1047px;height:1px;background:#000"></div>
<div class="a" style="left:498px;top:1074px;width:1047px;height:1px;background:#000"></div>
<div class="a" style="left:498px;top:953px;width:1px;height:247px;background:#000"></div>
<div class="a" style="left:530px;top:953px;width:1px;height:247px;background:#000"></div>
<div class="a" style="left:670px;top:953px;width:1px;height:247px;background:#000"></div>
<div class="a" style="left:924px;top:953px;width:1px;height:247px;background:#000"></div>
<div class="a" style="left:1042px;top:953px;width:1px;height:247px;background:#000"></div>
<div class="a" style="left:1123px;top:953px;width:1px;height:247px;background:#000"></div>
<div class="a" style="left:1195px;top:953px;width:1px;height:247px;background:#000"></div>
<div class="a" style="left:1268px;top:953px;width:1px;height:247px;background:#000"></div>
<div class="a" style="left:1343px;top:953px;width:1px;height:247px;background:#000"></div>
<div class="a" style="left:1417px;top:953px;width:1px;height:247px;background:#000"></div>
<div class="a" style="left:1478px;top:953px;width:1px;height:247px;background:#000"></div>
<div class="a" style="left:1544px;top:953px;width:1px;height:247px;background:#000"></div>
<span class="t" style='left:511.16px;top:957.00px;font:400 12px/14px "Liberation Sans", sans-serif;color:#000;letter-spacing:0.050px;'>1</span>
<span class="t" style='left:511.16px;top:1078.00px;font:400 12px/14px "Liberation Sans", sans-serif;color:#000;letter-spacing:0.050px;'>2</span>
<span class="t" style='left:533.75px;top:957.00px;font:700 12px/14px "Liberation Sans", sans-serif;color:#000;letter-spacing:0.079px;'>ФЕР08-02-001-01</span>
<span class="t" style='left:533.75px;top:972.00px;font:700 12px/14px "Liberation Sans", sans-serif;color:#000;letter-spacing:-0.226px;'>Приказ Минстроя</span>
<span class="t" style='left:533.75px;top:987.00px;font:700 12px/14px "Liberation Sans", sans-serif;color:#000;letter-spacing:-0.044px;'>России от 30.12.2016</span>
<span class="t" style='left:533.75px;top:1002.00px;font:700 12px/14px "Liberation Sans", sans-serif;color:#000;letter-spacing:-0.061px;'>№1039/пр</span>
<span class="t" style='left:533.75px;top:1078.00px;font:700 12px/14px "Liberation Sans", sans-serif;color:#000;letter-spacing:0.075px;'>ФССЦ-04.3.01.12-0002</span>
<span class="t" style='left:533.75px;top:1093.00px;font:700 12px/14px "Liberation Sans", sans-serif;color:#000;letter-spacing:-0.226px;'>Приказ Минстроя</span>
<span class="t" style='left:673.75px;top:957.00px;font:400 12px/14px "Liberation Sans", sans-serif;color:#000;letter-spacing:0.015px;'>Кладка стен кирпичных наружных: простых</span>
<span class="t" style='left:673.75px;top:972.00px;font:400 12px/14px "Liberation Sans", sans-serif;color:#000;letter-spacing:0.053px;'>при высоте этажа до 4 м</span>
<span class="t" style='left:673.75px;top:987.00px;font:400 12px/14px "Liberation Sans", sans-serif;color:#000;letter-spacing:0.082px;'>(м3)</span>
<span class="t" style='left:673.75px;top:1002.00px;font:400 12px/14px "Liberation Sans", sans-serif;color:#000;'>ИНДЕКС К ПОЗИЦИИ:</span>
<span class="t" style='left:673.75px;top:1017.00px;font:400 12px/14px "Liberation Sans", sans-serif;color:#000;letter-spacing:0.065px;'>ФЕР08-02-001-01 2 зона. 2 кв 2018.</span>
<span class="t" style='left:673.75px;top:1032.00px;font:400 12px/14px "Liberation Sans", sans-serif;color:#000;letter-spacing:0.054px;'>Индексы НСО к ФЕР в ред 2017 с изм</span>
<span class="t" style='left:673.75px;top:1047.00px;font:400 12px/14px "Liberation Sans", sans-serif;color:#000;letter-spacing:0.023px;'>№1-2 ОЗП=18,205; ЭМ=11,1209;</span>
<span class="t" style='left:673.75px;top:1078.00px;font:400 12px/14px "Liberation Sans", sans-serif;color:#000;letter-spacing:0.071px;'>Раствор готовый кладочный</span>
<span class="t" style='left:673.75px;top:1093.00px;font:400 12px/14px "Liberation Sans", sans-serif;color:#000;'>цементно-известковый, марка 25</span>
<span class="t" style='left:968.38px;top:957.00px;font:400 12px/14px "Liberation Sans", sans-serif;color:#000;letter-spacing:0.050px;'>141,4</span>
<span class="t" style='left:966.36px;top:1078.00px;font:400 12px/14px "Liberation Sans", sans-serif;color:#000;letter-spacing:0.050px;'>-33,94</span>
<span class="t" style='left:1096.90px;top:957.00px;font:400 10px/12px "Liberation Sans", sans-serif;color:#000;letter-spacing:0.450px;'>1810</span>
<span class="t" style='left:1087.66px;top:970.00px;font:400 10px/12px "Liberation Sans", sans-serif;color:#000;letter-spacing:0.450px;'>816,86</span>
<span class="t" style='left:1159.66px;top:957.00px;font:400 10px/12px "Liberation Sans", sans-serif;color:#000;letter-spacing:0.450px;'>384,34</span>
<span class="t" style='left:1165.67px;top:970.00px;font:400 10px/12px "Liberation Sans", sans-serif;color:#000;letter-spacing:0.450px;'>94,22</span>
<span class="t" style='left:1229.88px;top:957.00px;font:400 10px/12px "Liberation Sans", sans-serif;color:#000;letter-spacing:0.450px;'>255934</span>
<span class="t" style='left:1305.61px;top:957.00px;font:400 10px/12px "Liberation Sans", sans-serif;color:#000;letter-spacing:0.450px;'>115504</span>
<span class="t" style='left:1384.89px;top:957.00px;font:400 10px/12px "Liberation Sans", sans-serif;color:#000;letter-spacing:0.450px;'>54346</span>
<span class="t" style='left:1384.89px;top:970.00px;font:400 10px/12px "Liberation Sans", sans-serif;color:#000;letter-spacing:0.450px;'>13323</span>
<span class="t" style='left:1460.69px;top:957.00px;font:400 10px/12px "Liberation Sans", sans-serif;color:#000;letter-spacing:0.450px;'>5,4</span>
<span class="t" style='left:1508.66px;top:957.00px;font:400 10px/12px "Liberation Sans", sans-serif;color:#000;letter-spacing:0.450px;'>763,56</span>
<span class="t" style='left:1081.64px;top:1078.00px;font:400 10px/12px "Liberation Sans", sans-serif;color:#000;letter-spacing:0.450px;'>2498,47</span>
<span class="t" style='left:1232.11px;top:1078.00px;font:400 10px/12px "Liberation Sans", sans-serif;color:#000;letter-spacing:0.450px;'>-84798</span>
</div></div>
<div class="a" style="left:1574px;top:906px;width:2px;height:190px;background:#000;"></div>
<div class="a" style="left:1599px;top:91px;width:17px;height:1005px;background:#f0f0f0;"></div>
<div class="a" style="left:1599px;top:91px;width:1px;height:1005px;background:#fafafa;"></div>
<div class="a" style="left:1600px;top:108px;width:15px;height:29px;background:#c9c9c9;"></div>
<svg style="left:1603px;top:96px" width="10" height="8" viewBox="-5 -4 10 8"><path d="M-3.5 2L0 -1.5L3.5 2" stroke="#454545" stroke-width="1.9" fill="none"/></svg>
<svg style="left:1603px;top:1083.5px" width="10" height="8" viewBox="-5 -4 10 8"><path d="M-3.5 -2L0 1.5L3.5 -2" stroke="#454545" stroke-width="1.9" fill="none"/></svg>
<div class="a" style="left:1622px;top:90px;width:150px;height:1007px;background:#8a8a8a;"></div>
<div class="a" style="left:1623px;top:91px;width:131px;height:1005px;background:#a0a0a0;"></div>
<div class="a" style="left:1754px;top:91px;width:17px;height:1005px;background:#f0f0f0;"></div>
<div class="a" style="left:1755.5px;top:108px;width:14.5px;height:255px;background:#c9c9c9;"></div>
<svg style="left:1758px;top:96px" width="10" height="8" viewBox="-5 -4 10 8"><path d="M-3.5 2L0 -1.5L3.5 2" stroke="#454545" stroke-width="1.9" fill="none"/></svg>
<svg style="left:1758px;top:1083.5px" width="10" height="8" viewBox="-5 -4 10 8"><path d="M-3.5 -2L0 1.5L3.5 -2" stroke="#454545" stroke-width="1.9" fill="none"/></svg>
<div class="a" style="left:1623px;top:91px;width:131px;height:1005px;overflow:hidden">
<div class="a" style="left:-1623px;top:-91px;width:0;height:0">
<div class="a" style="left:1629px;top:97px;width:116px;height:83px;background:#000;"></div>
<div class="a" style="left:1627px;top:95px;width:116px;height:83px;background:#2474c4;"></div>
<div class="a" style="left:1629px;top:97px;width:112px;height:79px;background:#fff;"></div>
<div class="a" style="left:1638px;top:113px;width:79px;height:1px;background:#000"></div>
<div class="a" style="left:1638px;top:124px;width:79px;height:1px;background:#000"></div>
<div class="a" style="left:1634px;top:141px;width:103px;height:1px;background:#000"></div>
<div class="a" style="left:1634px;top:155px;width:103px;height:1px;background:#000"></div>
<div class="a" style="left:1634px;top:157px;width:103px;height:1px;background:#000"></div>
<div class="a" style="left:1634px;top:160px;width:103px;height:1px;background:#000"></div>
<div class="a" style="left:1634px;top:162px;width:103px;height:1px;background:#000"></div>
<div class="a" style="left:1634px;top:160px;width:1px;height:3px;background:#000"></div>
<div class="a" style="left:1736px;top:160px;width:1px;height:3px;background:#000"></div>
<div class="a" style="left:1731px;top:159px;width:6px;height:2px;background:#000"></div>
<div class="a" style="left:1687px;top:147px;width:50px;height:1px;background:#000"></div>
<div class="a" style="left:1687px;top:150px;width:22px;height:1px;background:#000"></div>
<div class="a" style="left:1717px;top:150px;width:20px;height:1px;background:#000"></div>
<div class="a" style="left:1634px;top:141px;width:1px;height:17px;background:#000"></div>
<div class="a" style="left:1637px;top:141px;width:1px;height:16px;background:#000"></div>
<div class="a" style="left:1651px;top:141px;width:1px;height:16px;background:#000"></div>
<div class="a" style="left:1675px;top:141px;width:1px;height:16px;background:#000"></div>
<div class="a" style="left:1687px;top:147px;width:1px;height:10px;background:#000"></div>
<div class="a" style="left:1695px;top:148px;width:1px;height:9px;background:#000"></div>
<div class="a" style="left:1702px;top:141px;width:1px;height:16px;background:#000"></div>
<div class="a" style="left:1709px;top:148px;width:1px;height:9px;background:#000"></div>
<div class="a" style="left:1717px;top:148px;width:1px;height:9px;background:#000"></div>
<div class="a" style="left:1724px;top:141px;width:1px;height:16px;background:#000"></div>
<div class="a" style="left:1730px;top:148px;width:1px;height:9px;background:#000"></div>
<div class="a" style="left:1736px;top:141px;width:1px;height:17px;background:#000"></div>
<span class="t" style='left:1671.09px;top:115.00px;font:400 48px/58px "Liberation Mono", monospace;color:rgba(25,25,150,.62);transform:scaleY(1.18);transform-origin:50% 42px;'>1</span>
<div class="a" style="left:1630px;top:191px;width:114px;height:80px;background:#000;"></div>
<div class="a" style="left:1628px;top:189px;width:114px;height:80px;background:#000;"></div>
<div class="a" style="left:1629px;top:190px;width:112px;height:78px;background:#fff;"></div>
<div class="a" style="left:1634px;top:195px;width:103px;height:1px;background:#000"></div>
<div class="a" style="left:1634px;top:207px;width:103px;height:1px;background:#000"></div>
<div class="a" style="left:1634px;top:217px;width:103px;height:1px;background:#000"></div>
<div class="a" style="left:1634px;top:227px;width:103px;height:1px;background:#000"></div>
<div class="a" style="left:1634px;top:238px;width:103px;height:1px;background:#000"></div>
<div class="a" style="left:1634px;top:252px;width:103px;height:1px;background:#000"></div>
<div class="a" style="left:1634px;top:261px;width:103px;height:1px;background:#000"></div>
<div class="a" style="left:1634px;top:195px;width:1px;height:67px;background:#000"></div>
<div class="a" style="left:1637px;top:195px;width:1px;height:67px;background:#000"></div>
<div class="a" style="left:1651px;top:195px;width:1px;height:67px;background:#000"></div>
<div class="a" style="left:1675px;top:195px;width:1px;height:67px;background:#000"></div>
<div class="a" style="left:1687px;top:195px;width:1px;height:67px;background:#000"></div>
<div class="a" style="left:1695px;top:195px;width:1px;height:67px;background:#000"></div>
<div class="a" style="left:1702px;top:195px;width:1px;height:67px;background:#000"></div>
<div class="a" style="left:1709px;top:195px;width:1px;height:67px;background:#000"></div>
<div class="a" style="left:1717px;top:195px;width:1px;height:67px;background:#000"></div>
<div class="a" style="left:1724px;top:195px;width:1px;height:67px;background:#000"></div>
<div class="a" style="left:1730px;top:195px;width:1px;height:67px;background:#000"></div>
<div class="a" style="left:1736px;top:195px;width:1px;height:67px;background:#000"></div>
<span class="t" style='left:1671.09px;top:208.00px;font:400 48px/58px "Liberation Mono", monospace;color:rgba(25,25,150,.62);transform:scaleY(1.18);transform-origin:50% 42px;'>2</span>
<div class="a" style="left:1630px;top:284px;width:114px;height:80px;background:#000;"></div>
<div class="a" style="left:1628px;top:282px;width:114px;height:80px;background:#000;"></div>
<div class="a" style="left:1629px;top:283px;width:112px;height:78px;background:#fff;"></div>
<div class="a" style="left:1634px;top:288px;width:103px;height:1px;background:#000"></div>
<div class="a" style="left:1634px;top:298px;width:103px;height:1px;background:#000"></div>
<div class="a" style="left:1634px;top:308px;width:103px;height:1px;background:#000"></div>
<div class="a" style="left:1634px;top:309px;width:103px;height:1px;background:#000"></div>
<div class="a" style="left:1634px;top:316px;width:103px;height:1px;background:#000"></div>
<div class="a" style="left:1634px;top:328px;width:103px;height:1px;background:#000"></div>
<div class="a" style="left:1634px;top:338px;width:103px;height:1px;background:#000"></div>
<div class="a" style="left:1634px;top:348px;width:103px;height:1px;background:#000"></div>
<div class="a" style="left:1634px;top:288px;width:1px;height:61px;background:#000"></div>
<div class="a" style="left:1637px;top:288px;width:1px;height:61px;background:#000"></div>
<div class="a" style="left:1651px;top:288px;width:1px;height:61px;background:#000"></div>
<div class="a" style="left:1675px;top:288px;width:1px;height:61px;background:#000"></div>
<div class="a" style="left:1687px;top:288px;width:1px;height:61px;background:#000"></div>
<div class="a" style="left:1695px;top:288px;width:1px;height:61px;background:#000"></div>
<div class="a" style="left:1702px;top:288px;width:1px;height:61px;background:#000"></div>
<div class="a" style="left:1709px;top:288px;width:1px;height:61px;background:#000"></div>
<div class="a" style="left:1717px;top:288px;width:1px;height:61px;background:#000"></div>
<div class="a" style="left:1724px;top:288px;width:1px;height:61px;background:#000"></div>
<div class="a" style="left:1730px;top:288px;width:1px;height:61px;background:#000"></div>
<div class="a" style="left:1736px;top:288px;width:1px;height:61px;background:#000"></div>
<span class="t" style='left:1671.09px;top:301.00px;font:400 48px/58px "Liberation Mono", monospace;color:rgba(25,25,150,.62);transform:scaleY(1.18);transform-origin:50% 42px;'>3</span>
<div class="a" style="left:1630px;top:377px;width:114px;height:80px;background:#000;"></div>
<div class="a" style="left:1628px;top:375px;width:114px;height:80px;background:#000;"></div>
<div class="a" style="left:1629px;top:376px;width:112px;height:78px;background:#fff;"></div>
<div class="a" style="left:1634px;top:381px;width:103px;height:1px;background:#000"></div>
<div class="a" style="left:1634px;top:391px;width:103px;height:1px;background:#000"></div>
<div class="a" style="left:1634px;top:404px;width:103px;height:1px;background:#000"></div>
<div class="a" style="left:1634px;top:415px;width:103px;height:1px;background:#000"></div>
<div class="a" style="left:1634px;top:425px;width:103px;height:1px;background:#000"></div>
<div class="a" style="left:1634px;top:435px;width:103px;height:1px;background:#000"></div>
<div class="a" style="left:1634px;top:446px;width:103px;height:1px;background:#000"></div>
<div class="a" style="left:1634px;top:381px;width:1px;height:66px;background:#000"></div>
<div class="a" style="left:1637px;top:381px;width:1px;height:66px;background:#000"></div>
<div class="a" style="left:1651px;top:381px;width:1px;height:66px;background:#000"></div>
<div class="a" style="left:1675px;top:381px;width:1px;height:66px;background:#000"></div>
<div class="a" style="left:1687px;top:381px;width:1px;height:66px;background:#000"></div>
<div class="a" style="left:1695px;top:381px;width:1px;height:66px;background:#000"></div>
<div class="a" style="left:1702px;top:381px;width:1px;height:66px;background:#000"></div>
<div class="a" style="left:1709px;top:381px;width:1px;height:66px;background:#000"></div>
<div class="a" style="left:1717px;top:381px;width:1px;height:66px;background:#000"></div>
<div class="a" style="left:1724px;top:381px;width:1px;height:66px;background:#000"></div>
<div class="a" style="left:1730px;top:381px;width:1px;height:66px;background:#000"></div>
<div class="a" style="left:1736px;top:381px;width:1px;height:66px;background:#000"></div>
<span class="t" style='left:1671.09px;top:394.00px;font:400 48px/58px "Liberation Mono", monospace;color:rgba(25,25,150,.62);transform:scaleY(1.18);transform-origin:50% 42px;'>4</span>
<div class="a" style="left:1630px;top:470px;width:114px;height:80px;background:#000;"></div>
<div class="a" style="left:1628px;top:468px;width:114px;height:80px;background:#000;"></div>
<div class="a" style="left:1629px;top:469px;width:112px;height:78px;background:#fff;"></div>
<div class="a" style="left:1634px;top:474px;width:103px;height:1px;background:#000"></div>
<div class="a" style="left:1634px;top:487px;width:103px;height:1px;background:#000"></div>
<div class="a" style="left:1634px;top:500px;width:103px;height:1px;background:#000"></div>
<div class="a" style="left:1634px;top:513px;width:103px;height:1px;background:#000"></div>
<div class="a" style="left:1634px;top:524px;width:103px;height:1px;background:#000"></div>
<div class="a" style="left:1634px;top:537px;width:103px;height:1px;background:#000"></div>
<div class="a" style="left:1634px;top:474px;width:1px;height:64px;background:#000"></div>
<div class="a" style="left:1637px;top:474px;width:1px;height:64px;background:#000"></div>
<div class="a" style="left:1651px;top:474px;width:1px;height:64px;background:#000"></div>
<div class="a" style="left:1675px;top:474px;width:1px;height:64px;background:#000"></div>
<div class="a" style="left:1687px;top:474px;width:1px;height:64px;background:#000"></div>
<div class="a" style="left:1695px;top:474px;width:1px;height:64px;background:#000"></div>
<div class="a" style="left:1702px;top:474px;width:1px;height:64px;background:#000"></div>
<div class="a" style="left:1709px;top:474px;width:1px;height:64px;background:#000"></div>
<div class="a" style="left:1717px;top:474px;width:1px;height:64px;background:#000"></div>
<div class="a" style="left:1724px;top:474px;width:1px;height:64px;background:#000"></div>
<div class="a" style="left:1730px;top:474px;width:1px;height:64px;background:#000"></div>
<div class="a" style="left:1736px;top:474px;width:1px;height:64px;background:#000"></div>
<span class="t" style='left:1671.09px;top:487.00px;font:400 48px/58px "Liberation Mono", monospace;color:rgba(25,25,150,.62);transform:scaleY(1.18);transform-origin:50% 42px;'>5</span>
<div class="a" style="left:1630px;top:563px;width:114px;height:80px;background:#000;"></div>
<div class="a" style="left:1628px;top:561px;width:114px;height:80px;background:#000;"></div>
<div class="a" style="left:1629px;top:562px;width:112px;height:78px;background:#fff;"></div>
<div class="a" style="left:1634px;top:567px;width:103px;height:1px;background:#000"></div>
<div class="a" style="left:1634px;top:580px;width:103px;height:1px;background:#000"></div>
<div class="a" style="left:1634px;top:593px;width:103px;height:1px;background:#000"></div>
<div class="a" style="left:1634px;top:606px;width:103px;height:1px;background:#000"></div>
<div class="a" style="left:1634px;top:618px;width:103px;height:1px;background:#000"></div>
<div class="a" style="left:1634px;top:630px;width:103px;height:1px;background:#000"></div>
<div class="a" style="left:1634px;top:567px;width:1px;height:64px;background:#000"></div>
<div class="a" style="left:1637px;top:567px;width:1px;height:64px;background:#000"></div>
<div class="a" style="left:1651px;top:567px;width:1px;height:64px;background:#000"></div>
<div class="a" style="left:1675px;top:567px;width:1px;height:64px;background:#000"></div>
<div class="a" style="left:1687px;top:567px;width:1px;height:64px;background:#000"></div>
<div class="a" style="left:1695px;top:567px;width:1px;height:64px;background:#000"></div>
<div class="a" style="left:1702px;top:567px;width:1px;height:64px;background:#000"></div>
<div class="a" style="left:1709px;top:567px;width:1px;height:64px;background:#000"></div>
<div class="a" style="left:1717px;top:567px;width:1px;height:64px;background:#000"></div>
<div class="a" style="left:1724px;top:567px;width:1px;height:64px;background:#000"></div>
<div class="a" style="left:1730px;top:567px;width:1px;height:64px;background:#000"></div>
<div class="a" style="left:1736px;top:567px;width:1px;height:64px;background:#000"></div>
<span class="t" style='left:1671.09px;top:580.00px;font:400 48px/58px "Liberation Mono", monospace;color:rgba(25,25,150,.62);transform:scaleY(1.18);transform-origin:50% 42px;'>6</span>
<div class="a" style="left:1630px;top:656px;width:114px;height:80px;background:#000;"></div>
<div class="a" style="left:1628px;top:654px;width:114px;height:80px;background:#000;"></div>
<div class="a" style="left:1629px;top:655px;width:112px;height:78px;background:#fff;"></div>
<div class="a" style="left:1634px;top:660px;width:103px;height:1px;background:#000"></div>
<div class="a" style="left:1634px;top:672px;width:103px;height:1px;background:#000"></div>
<div class="a" style="left:1634px;top:685px;width:103px;height:1px;background:#000"></div>
<div class="a" style="left:1634px;top:695px;width:103px;height:1px;background:#000"></div>
<div class="a" style="left:1634px;top:698px;width:103px;height:1px;background:#000"></div>
<div class="a" style="left:1634px;top:712px;width:103px;height:1px;background:#000"></div>
<div class="a" style="left:1634px;top:722px;width:103px;height:1px;background:#000"></div>
<div class="a" style="left:1634px;top:660px;width:1px;height:63px;background:#000"></div>
<div class="a" style="left:1637px;top:660px;width:1px;height:63px;background:#000"></div>
<div class="a" style="left:1651px;top:660px;width:1px;height:63px;background:#000"></div>
<div class="a" style="left:1675px;top:660px;width:1px;height:63px;background:#000"></div>
<div class="a" style="left:1687px;top:660px;width:1px;height:63px;background:#000"></div>
<div class="a" style="left:1695px;top:660px;width:1px;height:63px;background:#000"></div>
<div class="a" style="left:1702px;top:660px;width:1px;height:63px;background:#000"></div>
<div class="a" style="left:1709px;top:660px;width:1px;height:63px;background:#000"></div>
<div class="a" style="left:1717px;top:660px;width:1px;height:63px;background:#000"></div>
<div class="a" style="left:1724px;top:660px;width:1px;height:63px;background:#000"></div>
<div class="a" style="left:1730px;top:660px;width:1px;height:63px;background:#000"></div>
<div class="a" style="left:1736px;top:660px;width:1px;height:63px;background:#000"></div>
<span class="t" style='left:1671.09px;top:673.00px;font:400 48px/58px "Liberation Mono", monospace;color:rgba(25,25,150,.62);transform:scaleY(1.18);transform-origin:50% 42px;'>7</span>
<div class="a" style="left:1630px;top:749px;width:114px;height:80px;background:#000;"></div>
<div class="a" style="left:1628px;top:747px;width:114px;height:80px;background:#000;"></div>
<div class="a" style="left:1629px;top:748px;width:112px;height:78px;background:#fff;"></div>
<div class="a" style="left:1634px;top:753px;width:103px;height:1px;background:#000"></div>
<div class="a" style="left:1634px;top:763px;width:103px;height:1px;background:#000"></div>
<div class="a" style="left:1634px;top:772px;width:103px;height:1px;background:#000"></div>
<div class="a" style="left:1634px;top:782px;width:103px;height:1px;background:#000"></div>
<div class="a" style="left:1634px;top:797px;width:103px;height:1px;background:#000"></div>
<div class="a" style="left:1634px;top:806px;width:103px;height:1px;background:#000"></div>
<div class="a" style="left:1634px;top:815px;width:103px;height:1px;background:#000"></div>
<div class="a" style="left:1634px;top:753px;width:1px;height:63px;background:#000"></div>
<div class="a" style="left:1637px;top:753px;width:1px;height:63px;background:#000"></div>
<div class="a" style="left:1651px;top:753px;width:1px;height:63px;background:#000"></div>
<div class="a" style="left:1675px;top:753px;width:1px;height:63px;background:#000"></div>
<div class="a" style="left:1687px;top:753px;width:1px;height:63px;background:#000"></div>
<div class="a" style="left:1695px;top:753px;width:1px;height:63px;background:#000"></div>
<div class="a" style="left:1702px;top:753px;width:1px;height:63px;background:#000"></div>
<div class="a" style="left:1709px;top:753px;width:1px;height:63px;background:#000"></div>
<div class="a" style="left:1717px;top:753px;width:1px;height:63px;background:#000"></div>
<div class="a" style="left:1724px;top:753px;width:1px;height:63px;background:#000"></div>
<div class="a" style="left:1730px;top:753px;width:1px;height:63px;background:#000"></div>
<div class="a" style="left:1736px;top:753px;width:1px;height:63px;background:#000"></div>
<span class="t" style='left:1671.09px;top:766.00px;font:400 48px/58px "Liberation Mono", monospace;color:rgba(25,25,150,.62);transform:scaleY(1.18);transform-origin:50% 42px;'>8</span>
<div class="a" style="left:1630px;top:842px;width:114px;height:80px;background:#000;"></div>
<div class="a" style="left:1628px;top:840px;width:114px;height:80px;background:#000;"></div>
<div class="a" style="left:1629px;top:841px;width:112px;height:78px;background:#fff;"></div>
<div class="a" style="left:1634px;top:846px;width:103px;height:1px;background:#000"></div>
<div class="a" style="left:1634px;top:856px;width:103px;height:1px;background:#000"></div>
<div class="a" style="left:1634px;top:866px;width:103px;height:1px;background:#000"></div>
<div class="a" style="left:1634px;top:867px;width:103px;height:1px;background:#000"></div>
<div class="a" style="left:1634px;top:878px;width:103px;height:1px;background:#000"></div>
<div class="a" style="left:1634px;top:889px;width:103px;height:1px;background:#000"></div>
<div class="a" style="left:1634px;top:899px;width:103px;height:1px;background:#000"></div>
<div class="a" style="left:1634px;top:909px;width:103px;height:1px;background:#000"></div>
<div class="a" style="left:1634px;top:846px;width:1px;height:64px;background:#000"></div>
<div class="a" style="left:1637px;top:846px;width:1px;height:64px;background:#000"></div>
<div class="a" style="left:1651px;top:846px;width:1px;height:64px;background:#000"></div>
<div class="a" style="left:1675px;top:846px;width:1px;height:64px;background:#000"></div>
<div class="a" style="left:1687px;top:846px;width:1px;height:64px;background:#000"></div>
<div class="a" style="left:1695px;top:846px;width:1px;height:64px;background:#000"></div>
<div class="a" style="left:1702px;top:846px;width:1px;height:64px;background:#000"></div>
<div class="a" style="left:1709px;top:846px;width:1px;height:64px;background:#000"></div>
<div class="a" style="left:1717px;top:846px;width:1px;height:64px;background:#000"></div>
<div class="a" style="left:1724px;top:846px;width:1px;height:64px;background:#000"></div>
<div class="a" style="left:1730px;top:846px;width:1px;height:64px;background:#000"></div>
<div class="a" style="left:1736px;top:846px;width:1px;height:64px;background:#000"></div>
<span class="t" style='left:1671.09px;top:859.00px;font:400 48px/58px "Liberation Mono", monospace;color:rgba(25,25,150,.62);transform:scaleY(1.18);transform-origin:50% 42px;'>9</span>
<div class="a" style="left:1630px;top:935px;width:114px;height:80px;background:#000;"></div>
<div class="a" style="left:1628px;top:933px;width:114px;height:80px;background:#000;"></div>
<div class="a" style="left:1629px;top:934px;width:112px;height:78px;background:#fff;"></div>
<div class="a" style="left:1634px;top:939px;width:103px;height:1px;background:#000"></div>
<div class="a" style="left:1634px;top:949px;width:103px;height:1px;background:#000"></div>
<div class="a" style="left:1634px;top:957px;width:103px;height:1px;background:#000"></div>
<div class="a" style="left:1634px;top:967px;width:103px;height:1px;background:#000"></div>
<div class="a" style="left:1634px;top:980px;width:103px;height:1px;background:#000"></div>
<div class="a" style="left:1634px;top:992px;width:103px;height:1px;background:#000"></div>
<div class="a" style="left:1634px;top:1002px;width:103px;height:1px;background:#000"></div>
<div class="a" style="left:1634px;top:939px;width:1px;height:64px;background:#000"></div>
<div class="a" style="left:1637px;top:939px;width:1px;height:64px;background:#000"></div>
<div class="a" style="left:1651px;top:939px;width:1px;height:64px;background:#000"></div>
<div class="a" style="left:1675px;top:939px;width:1px;height:64px;background:#000"></div>
<div class="a" style="left:1687px;top:939px;width:1px;height:64px;background:#000"></div>
<div class="a" style="left:1695px;top:939px;width:1px;height:64px;background:#000"></div>
<div class="a" style="left:1702px;top:939px;width:1px;height:64px;background:#000"></div>
<div class="a" style="left:1709px;top:939px;width:1px;height:64px;background:#000"></div>
<div class="a" style="left:1717px;top:939px;width:1px;height:64px;background:#000"></div>
<div class="a" style="left:1724px;top:939px;width:1px;height:64px;background:#000"></div>
<div class="a" style="left:1730px;top:939px;width:1px;height:64px;background:#000"></div>
<div class="a" style="left:1736px;top:939px;width:1px;height:64px;background:#000"></div>
<span class="t" style='left:1658.20px;top:952.00px;font:400 48px/58px "Liberation Mono", monospace;color:rgba(25,25,150,.62);transform:scaleY(1.18);transform-origin:50% 42px;'>10</span>
<div class="a" style="left:1630px;top:1028px;width:114px;height:80px;background:#000;"></div>
<div class="a" style="left:1628px;top:1026px;width:114px;height:80px;background:#000;"></div>
<div class="a" style="left:1629px;top:1027px;width:112px;height:78px;background:#fff;"></div>
<div class="a" style="left:1634px;top:1032px;width:103px;height:1px;background:#000"></div>
<div class="a" style="left:1634px;top:1042px;width:103px;height:1px;background:#000"></div>
<div class="a" style="left:1634px;top:1052px;width:103px;height:1px;background:#000"></div>
<div class="a" style="left:1634px;top:1053px;width:103px;height:1px;background:#000"></div>
<div class="a" style="left:1634px;top:1067px;width:103px;height:1px;background:#000"></div>
<div class="a" style="left:1634px;top:1076px;width:103px;height:1px;background:#000"></div>
<div class="a" style="left:1634px;top:1086px;width:103px;height:1px;background:#000"></div>
<div class="a" style="left:1634px;top:1096px;width:103px;height:1px;background:#000"></div>
<div class="a" style="left:1634px;top:1107px;width:103px;height:1px;background:#000"></div>
<div class="a" style="left:1634px;top:1032px;width:1px;height:76px;background:#000"></div>
<div class="a" style="left:1637px;top:1032px;width:1px;height:76px;background:#000"></div>
<div class="a" style="left:1651px;top:1032px;width:1px;height:76px;background:#000"></div>
<div class="a" style="left:1675px;top:1032px;width:1px;height:76px;background:#000"></div>
<div class="a" style="left:1687px;top:1032px;width:1px;height:76px;background:#000"></div>
<div class="a" style="left:1695px;top:1032px;width:1px;height:76px;background:#000"></div>
<div class="a" style="left:1702px;top:1032px;width:1px;height:76px;background:#000"></div>
<div class="a" style="left:1709px;top:1032px;width:1px;height:76px;background:#000"></div>
<div class="a" style="left:1717px;top:1032px;width:1px;height:76px;background:#000"></div>
<div class="a" style="left:1724px;top:1032px;width:1px;height:76px;background:#000"></div>
<div class="a" style="left:1730px;top:1032px;width:1px;height:76px;background:#000"></div>
<div class="a" style="left:1736px;top:1032px;width:1px;height:76px;background:#000"></div>
<span class="t" style='left:1658.20px;top:1045.00px;font:400 48px/58px "Liberation Mono", monospace;color:rgba(25,25,150,.62);transform:scaleY(1.18);transform-origin:50% 42px;'>11</span>
</div></div>
<svg style="left:1617px;top:64px" width="18" height="18" viewBox="0 0 18 18"><defs><radialGradient id="bk" cx=".5" cy=".35" r=".7"><stop offset="0" stop-color="#fff"/><stop offset="1" stop-color="#c5daf5"/></radialGradient></defs><circle cx="9" cy="9" r="7.800" fill="url(#bk)" stroke="#8fb0dc" stroke-width="1"/><path d="M13 9h-7.500M8.500 5.800L5.300 9l3.200 3.200" stroke="#2a63c8" stroke-width="1.800" fill="none"/></svg>
<span class="t" style='left:1645.50px;top:67.00px;font:400 11px/13px "Liberation Sans", sans-serif;color:#1c1c1c;letter-spacing:-0.080px;'>Назад к выбору форм</span>
<span class="t" style='left:442.50px;top:1106.00px;font:400 11px/13px "Liberation Sans", sans-serif;color:#1c1c1c;letter-spacing:0.009px;'>Страница:</span>
<svg style="left:504px;top:1104px" width="8" height="14" viewBox="0 0 8 14"><path d="M7 1.400L1 7l6 5.600z" fill="#c6c6c6" stroke="#b4b4b4" stroke-width=".5"/></svg>
<div class="a" style="left:520px;top:1101px;width:30px;height:21px;box-sizing:border-box;border:1px solid #7e7e7e;background:#fff"></div>
<span class="t" style='left:531.94px;top:1105.00px;font:400 11px/13px "Liberation Sans", sans-serif;color:#1c1c1c;'>1</span>
<svg style="left:558px;top:1104px" width="8" height="14" viewBox="0 0 8 14"><defs><linearGradient id="nx" x1="0" y1="0" x2="1" y2="0"><stop offset="0" stop-color="#2458cc"/><stop offset="1" stop-color="#5a96ee"/></linearGradient></defs><path d="M.500 1.300L6.600 7l-6.100 5.700z" fill="url(#nx)"/></svg>
<span class="t" style='left:574.50px;top:1106.00px;font:400 11px/13px "Liberation Sans", sans-serif;color:#1c1c1c;'>из 41</span>
<span class="t" style='left:1474.25px;top:1106.00px;font:400 11px/13px "Liberation Sans", sans-serif;color:#1c1c1c;letter-spacing:-0.223px;'>100%</span>
<svg style="left:1507.5px;top:1103px" width="18" height="18" viewBox="0 0 18 18"><defs><linearGradient id="cg0" x1="0" y1="0" x2="0" y2="1"><stop offset="0" stop-color="#fafafa"/><stop offset="1" stop-color="#cfcfcf"/></linearGradient></defs><circle cx="9" cy="9" r="7.800" fill="url(#cg0)" stroke="#9a9a9a" stroke-width="1"/><path d="M5 9h8" stroke="#555" stroke-width="2"/></svg>
<svg style="left:1669px;top:1103px" width="18" height="18" viewBox="0 0 18 18"><defs><linearGradient id="cg1" x1="0" y1="0" x2="0" y2="1"><stop offset="0" stop-color="#fafafa"/><stop offset="1" stop-color="#cfcfcf"/></linearGradient></defs><circle cx="9" cy="9" r="7.800" fill="url(#cg1)" stroke="#9a9a9a" stroke-width="1"/><path d="M5 9h8M9 5v8" stroke="#555" stroke-width="2"/></svg>
<div class="a" style="left:1531px;top:1111px;width:132px;height:1px;background:#a8a8a8;"></div>
<div class="a" style="left:1597.5px;top:1120px;width:1px;height:4px;background:#333;"></div>
<svg style="left:1593px;top:1104px" width="10" height="15" viewBox="0 0 10 15"><path d="M.500 .500h9v9.500l-4.500 4.500l-4.500-4.500z" fill="#e8eef8" stroke="#7a8aa0"/></svg>
<div class="a" style="left:1699px;top:1101px;width:22px;height:22px;box-sizing:border-box;border:1px solid #e3ad42;border-radius:3px;background:linear-gradient(180deg,#fdebb0 0,#fbd772 45%,#f8c850 100%);box-shadow:inset 0 0 0 1px rgba(255,244,200,.7)"></div>
<svg style="left:1700px;top:1100px" width="70" height="24" viewBox="1700 1100 70 24"><g fill="none" stroke="#4a68a0" stroke-width="1"><rect x="1703.500" y="1104.500" width="12" height="14" fill="#fff" fill-opacity=".55"/><path d="M1706.500 1104.500v14M1712.500 1104.500v14M1703.500 1107.500h12M1703.500 1115.500h12"/><rect x="1725.500" y="1104.500" width="14" height="14" stroke="#7a8fb4"/><rect x="1727.500" y="1110.500" width="10" height="6"/><path d="M1727.500 1107.500h10M1729.500 1105.800l-2 1.700l2 1.700M1735.500 1105.800l2 1.700l-2 1.700"/><rect x="1748.500" y="1104.500" width="14" height="14" stroke="#7a8fb4"/><rect x="1752.500" y="1108.500" width="6" height="6"/><path d="M1755.500 1105.500v2M1755.500 1115.500v2M1749.500 1111.500h2M1759.500 1111.500h2"/></g></svg>
<svg style="left:0;top:0;filter:drop-shadow(0px 3px 2.500px rgba(20,30,50,.5))" width="1786" height="1127" viewBox="0 0 1786 1127"><path d="M50.9 614.9H112V605.1L141.3 619.9L112 634.7V624.9H50.9a5 5 0 0 1 0 -10z" fill="#f8413d"/><path d="M56.8 656.2H109V646.4L138.3 661.2L109 676V666.2H56.8a5 5 0 0 1 0 -10z" fill="#f8413d"/><g transform="translate(153.700 103.500) rotate(33.700)"><path d="M0 0L-29.400 -14.400V-5.800L-104 -5H-104A5 5 0 0 0 -104 5L-29.400 5.800V14.400z" fill="#f8413d"/></g></svg>
<div class="a" style="left:1px;top:60px;width:1px;height:1066px;background:#b9dcff;"></div>
<div class="a" style="left:1px;top:1125px;width:1784px;height:1px;background:#b9dcff;"></div>
<div class="a" style="left:1784px;top:60px;width:1px;height:1066px;background:rgba(185,220,255,.6);"></div>
<div class="a" style="left:0px;top:0px;width:1786px;height:1px;background:#2672c0;"></div>
<div class="a" style="left:0px;top:0px;width:1px;height:1127px;background:#2672c0;"></div>
<div class="a" style="left:1785px;top:0px;width:1px;height:1127px;background:#2672c0;"></div>
<div class="a" style="left:0px;top:1126px;width:1786px;height:1px;background:#2672c0;"></div>
</body></html>
